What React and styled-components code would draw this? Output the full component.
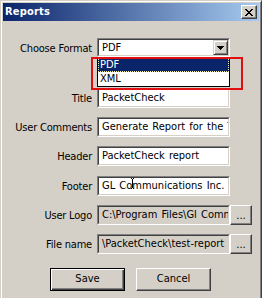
import React from "react";
import styled, { createGlobalStyle } from "styled-components";

const GlobalStyle = createGlobalStyle`
  html, body { margin: 0; padding: 0; background: #d4d0c8; }
  body {
    font-family: "DejaVu Sans Condensed", "DejaVu Sans", "Liberation Sans", sans-serif;
    font-stretch: condensed;
    font-size: 11px;
    color: #000;
  }
  #root { width: 262px; height: 298px; overflow: hidden; }
`;

const Window = styled.div`
  position: relative;
  box-sizing: border-box;
  width: 262px;
  height: 310px;
  padding: 2px 2px 0 2px;
  background: #d4d0c8;
  border: 1px solid;
  border-color: #d4d0c8 #404040 #404040 #d4d0c8;
  box-shadow: inset 1px 1px #fff, inset -1px -1px #808080;
  display: flex;
  flex-direction: column;
`;

const TitleBar = styled.div`
  display: flex;
  align-items: center;
  justify-content: space-between;
  height: 18px;
  padding: 0 2px;
  background: linear-gradient(to right, #0a246a, #a6caf0);
`;

const TitleText = styled.span`
  color: #fff;
  font-weight: bold;
  font-size: 11px;
  letter-spacing: 0.2px;
  line-height: 18px;
`;

const CloseButton = styled.div`
  box-sizing: border-box;
  width: 16px;
  height: 14px;
  padding-top: 1px;
  display: flex;
  align-items: center;
  justify-content: center;
  background: #d4d0c8;
  border: 1px solid;
  border-color: #fff #404040 #404040 #fff;
  box-shadow: inset -1px -1px #808080;
`;

const Body = styled.div`
  display: flex;
  flex-direction: column;
  padding-top: 17px;
`;

const Form = styled.div`
  display: flex;
  flex-direction: column;
  gap: 9.2px;
`;

const Row = styled.div`
  display: grid;
  grid-template-columns: 94px 133px 22px;
  height: ${(p) => (p.$combo ? "19px" : "20px")};
  margin-bottom: ${(p) => (p.$combo ? "21.8px" : "0")};
`;

const Label = styled.div`
  text-align: right;
  padding: 3px 5px 0 0;
  line-height: 16px;
  letter-spacing: -0.2px;
  white-space: nowrap;
`;

const Field = styled.div`
  box-sizing: border-box;
  height: 100%;
  border: 1px solid;
  border-color: #808080 #fff #fff #808080;
  display: flex;
`;

const FieldInner = styled.div`
  flex: 1;
  min-width: 0;
  display: flex;
  border: 1px solid;
  border-color: #404040 #d4d0c8 #d4d0c8 #404040;
  background: ${(p) => (p.$readOnly ? "#d4d0c8" : "#fff")};
  overflow: hidden;
`;

const FieldText = styled.div`
  flex: 1;
  min-width: 0;
  padding: ${(p) => (p.$combo ? "1px 0 0 3px" : "0 0 0 3px")};
  line-height: ${(p) => (p.$combo ? "14px" : "16px")};
  letter-spacing: 0px;
  word-spacing: 1px;
  white-space: nowrap;
  overflow: hidden;
`;

const CaretAnchor = styled.span`
  position: relative;
  display: inline-block;
  width: 0;
  height: 12px;
  vertical-align: -2px;
`;

const Cursor = styled.svg`
  position: absolute;
  left: -1px;
  top: -1px;
`;

const ArrowButton = styled.div`
  box-sizing: border-box;
  width: 15px;
  display: flex;
  align-items: center;
  justify-content: center;
  background: #d4d0c8;
  border: 1px solid;
  border-color: #d4d0c8 #404040 #404040 #d4d0c8;
  box-shadow: inset 1px 1px #fff, inset -1px -1px #808080;
`;

const PushButton = styled.div`
  box-sizing: border-box;
  width: ${(p) => p.$w || "75px"};
  height: ${(p) => p.$h || "23px"};
  display: flex;
  align-items: center;
  justify-content: center;
  padding-top: ${(p) => p.$padTop || "0"};
  background: #d4d0c8;
  border: 1px solid;
  border-color: ${(p) =>
    p.$default ? "#000" : "#fff #404040 #404040 #fff"};
  box-shadow: ${(p) =>
    p.$default
      ? "inset 1px 1px #fff, inset -1px -1px #404040, inset -2px -2px #808080"
      : "inset -1px -1px #808080"};
  line-height: 14px;
`;

const ButtonRow = styled.div`
  display: flex;
  gap: 11px;
  padding-left: 47px;
  margin-top: 14px;
`;

const DropList = styled.div`
  position: absolute;
  left: 96px;
  top: 56px;
  box-sizing: border-box;
  width: 133px;
  height: 30px;
  border: 1px solid #000;
  background: #fff;
  display: flex;
  flex-direction: column;
`;

const ListItem = styled.div`
  position: relative;
  height: 14px;
  line-height: 14px;
  padding-left: 2px;
  background: ${(p) => (p.$selected ? "#0a246a" : "#fff")};
  color: ${(p) => (p.$selected ? "#fff" : "#000")};
  &::after {
    content: "";
    display: ${(p) => (p.$selected ? "block" : "none")};
    position: absolute;
    inset: 0;
    border: 1px dotted #f4f0a8;
  }
`;

const Annotation = styled.div`
  position: absolute;
  left: 90px;
  top: 56px;
  box-sizing: border-box;
  width: 152px;
  height: 33px;
  border: 2px solid #e01010;
  pointer-events: none;
`;

const CloseIcon = () => (
  <svg width="8" height="7" viewBox="0 0 8 7" shapeRendering="crispEdges">
    <path
      fill="#000"
      d="M0 0h2v1H0zM6 0h2v1H6zM1 1h2v1H1zM5 1h2v1H5zM2 2h4v1H2zM3 3h2v1H3zM2 4h4v1H2zM1 5h2v1H1zM5 5h2v1H5zM0 6h2v1H0zM6 6h2v1H6z"
    />
  </svg>
);

const DownArrow = () => (
  <svg width="7" height="4" viewBox="0 0 7 4" shapeRendering="crispEdges">
    <path fill="#000" d="M0 0h7v1H0zM1 1h5v1H1zM2 2h3v1H2zM3 3h1v1H3z" />
  </svg>
);

const IBeam = () => (
  <CaretAnchor>
    <Cursor width="3" height="12" viewBox="0 0 3 12" shapeRendering="crispEdges">
      <path fill="#000" d="M0 0h1v1H0zM2 0h1v1H2zM1 1h1v9H1zM0 10h1v1H0zM2 10h1v1H2z" />
    </Cursor>
  </CaretAnchor>
);

const TextRow = ({ label, children, readOnly, browse }) => (
  <Row>
    <Label>{label}</Label>
    <Field>
      <FieldInner $readOnly={readOnly}>
        <FieldText>{children}</FieldText>
      </FieldInner>
    </Field>
    {browse && (
      <PushButton $w="22px" $h="20px" $padTop="3px">
        ...
      </PushButton>
    )}
  </Row>
);

export default function App() {
  return (
    <>
      <GlobalStyle />
      <Window>
        <TitleBar>
          <TitleText>Reports</TitleText>
          <CloseButton>
            <CloseIcon />
          </CloseButton>
        </TitleBar>
        <Body>
          <Form>
            <Row $combo>
              <Label>Choose Format</Label>
              <Field>
                <FieldInner>
                  <FieldText $combo>PDF</FieldText>
                  <ArrowButton>
                    <DownArrow />
                  </ArrowButton>
                </FieldInner>
              </Field>
            </Row>
            <TextRow label="Title">PacketCheck</TextRow>
            <TextRow label="User Comments">Generate Report for the Test</TextRow>
            <TextRow label="Header">PacketCheck report</TextRow>
            <TextRow label="Footer">
              GL Co
              <IBeam />
              mmunications Inc.
            </TextRow>
            <TextRow label="User Logo" readOnly browse>
              C:\Program Files\Gl Communications
            </TextRow>
            <TextRow label="File name" readOnly browse>
              \PacketCheck\test-report
            </TextRow>
          </Form>
          <ButtonRow>
            <PushButton $default>Save</PushButton>
            <PushButton>Cancel</PushButton>
          </ButtonRow>
        </Body>
        <DropList>
          <ListItem $selected>PDF</ListItem>
          <ListItem>XML</ListItem>
        </DropList>
        <Annotation />
      </Window>
    </>
  );
}
